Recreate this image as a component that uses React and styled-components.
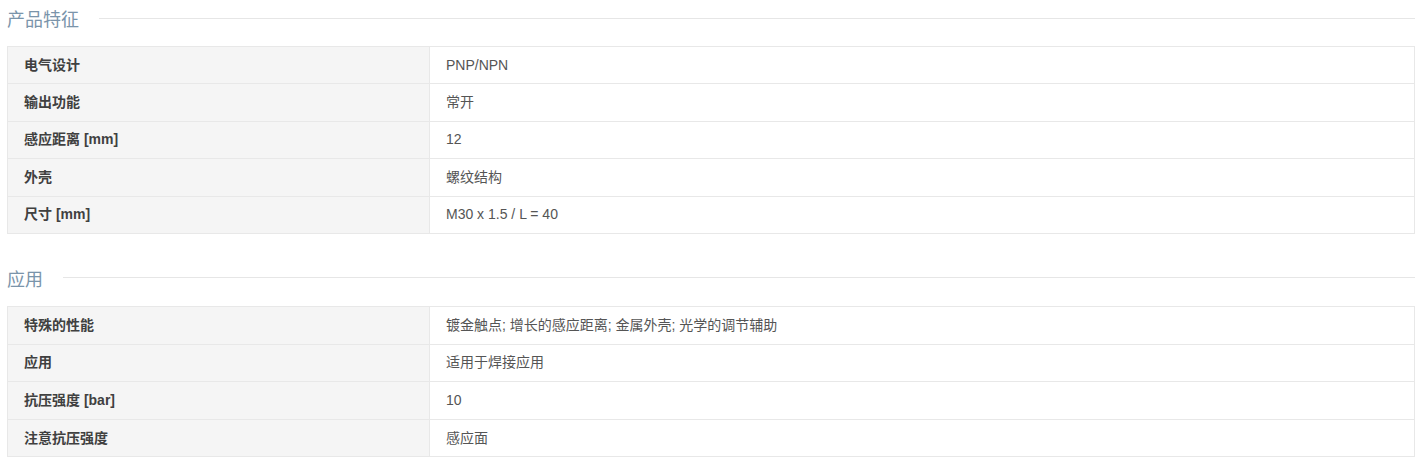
import React from "react";
import styled, { createGlobalStyle } from "styled-components";

const Global = createGlobalStyle`
  html, body { margin: 0; padding: 0; background: #fff; }
  body { font-family: "Liberation Sans", "Noto Sans CJK SC", Arial, sans-serif; }
`;

const Page = styled.div`
  width: 1408px;
  padding-left: 7px;
`;

const Section = styled.section`
  & + & { margin-top: 26px; }
`;

const Heading = styled.div`
  height: 36px;
  display: flex;
  align-items: center;
  gap: 20px;
`;

const HeadingText = styled.h2`
  margin: 0;
  font-family: "Noto Sans CJK SC", "Liberation Sans", sans-serif;
  font-weight: 400;
  font-size: 18px;
  line-height: 1;
  color: #7a94aa;
  white-space: nowrap;
`;

const HeadingRule = styled.div`
  flex: 1;
  height: 1px;
  background: #e6e6e6;
`;

const Table = styled.table`
  margin-top: 10px;
  width: 100%;
  border-collapse: collapse;
  table-layout: fixed;
  font-size: 14px;
`;

const Row = styled.tr`
  height: ${(p) => p.$h}px;
`;

const Cell = styled.td`
  box-sizing: border-box;
  border: 1px solid #e8e8e8;
  padding: 0 16px;
  vertical-align: middle;
  line-height: 17px;
  width: ${(p) => (p.$label ? "422px" : "auto")};
  background: ${(p) => (p.$label ? "#f5f5f5" : "#fff")};
  color: ${(p) => (p.$label ? "#404040" : "#555")};
  font-weight: ${(p) => (p.$label ? 700 : 400)};
`;

const sections = [
  {
    title: "产品特征",
    h: 37.4,
    rows: [
      ["电气设计", "PNP/NPN"],
      ["输出功能", "常开"],
      ["感应距离 [mm]", "12"],
      ["外壳", "螺纹结构"],
      ["尺寸 [mm]", "M30 x 1.5 / L = 40"],
    ],
  },
  {
    title: "应用",
    h: 37.6,
    rows: [
      ["特殊的性能", "镀金触点; 增长的感应距离; 金属外壳; 光学的调节辅助"],
      ["应用", "适用于焊接应用"],
      ["抗压强度 [bar]", "10"],
      ["注意抗压强度", "感应面"],
    ],
  },
];

export default function App() {
  return (
    <Page>
      <Global />
      {sections.map((s) => (
        <Section key={s.title}>
          <Heading>
            <HeadingText>{s.title}</HeadingText>
            <HeadingRule />
          </Heading>
          <Table>
            <tbody>
              {s.rows.map(([k, v]) => (
                <Row key={k} $h={s.h}>
                  <Cell $label>{k}</Cell>
                  <Cell>{v}</Cell>
                </Row>
              ))}
            </tbody>
          </Table>
        </Section>
      ))}
    </Page>
  );
}
